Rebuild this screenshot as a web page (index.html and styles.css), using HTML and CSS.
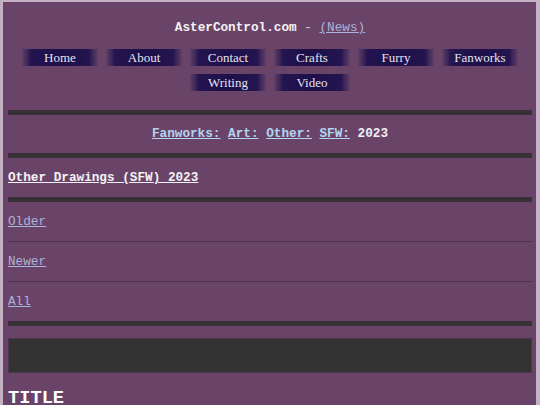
FILE: index.html
```html
<!DOCTYPE html>
<html lang="en">
<head>
	<meta charset="UTF-8">
	<title>Other Drawings (SFW) 2023 - AsterControl.com</title>
	<link rel="stylesheet" href="styles.css">
</head>
<body>

<div class="page">
	<div class="header">
		<p class="site"><b>AsterControl.com</b> - <a href="#">(News)</a></p>
		<div class="nav">
			<a href="#">Home</a>
			<a href="#">About</a>
			<a href="#">Contact</a>
			<a href="#">Crafts</a>
			<a href="#">Furry</a>
			<a href="#">Fanworks</a>
			<a href="#">Writing</a>
			<a href="#">Video</a>
		</div>
	</div>

	<hr class="bar">
	<p class="crumbs"><a href="#">Fanworks:</a> <a href="#">Art:</a> <a href="#">Other:</a> <a href="#">SFW:</a> 2023</p>
	<hr class="bar">
	<p class="heading"><a href="#">Other Drawings (SFW) 2023</a></p>
	<hr class="bar">

	<ul class="pager">
		<li><a href="#">Older</a></li>
		<li><a href="#">Newer</a></li>
		<li><a href="#">All</a></li>
	</ul>

	<hr class="bar">
	<div class="gallery"></div>

	<h1 class="title">TITLE</h1>
</div>

</body>
</html>
```

FILE: styles.css
```css
*{margin: 0;padding: 0;}
ul{list-style: none;}
html{
	background: #c4b2c4;
}
body{
	font-family: "Liberation Mono", "Courier New", monospace;
	font-size: 12.7px;
	line-height: 16px;
	color: #f2f0f2;
}
/*page frame*/
.page{
	margin: 2px 4px 0 3px;
	padding: 0 4px 0 5px;
	background: #6a4468;
	min-height: 420px;
}
a{
	color: #a9b3dc;
}

/*header*/
.header{
	padding-top: 18px;
	text-align: center;
}
.header .site{
	color: #d8cfd8;
}
.header .site b{
	color: #f4f2f4;
}
.nav{
	display: flex;
	flex-wrap: wrap;
	justify-content: center;
	gap: 8px 6px;
	margin-top: 13px;
	margin-bottom: 19px;
}
.nav a{
	display: block;
	width: 78px;
	height: 17px;
	line-height: 17px;
	font-family: "Liberation Serif", "Times New Roman", serif;
	font-size: 13px;
	color: #e6e2ee;
	text-decoration: none;
	text-align: center;
	background: linear-gradient(to right, rgba(30,17,80,0) 0, #241550 10px, #1c0f4a 50%, #241550 calc(100% - 10px), rgba(30,17,80,0) 100%);
}

/*thick rules*/
.bar{
	height: 3px;
	background: #333;
	border: 1px solid #3f2d3f;
}

.crumbs{
	padding: 11px 0;
	text-align: center;
	font-weight: bold;
}
.crumbs a{
	color: #b3d4f0;
}
.heading{
	padding: 12px 0 11px;
	font-weight: bold;
}
.heading a{
	color: #f4f2f4;
}

/*older / newer / all*/
.pager li{
	padding: 12px 0 11px;
	border-bottom: 1px solid #4e3050;
}
.pager li:last-child{
	border-bottom: none;
}

.gallery{
	height: 33px;
	margin-top: 12px;
	background: #333;
	border: 1px solid #4a3848;
}
.title{
	margin-top: 14px;
	font-size: 18.7px;
	line-height: 22px;
	color: #fff;
}
```
